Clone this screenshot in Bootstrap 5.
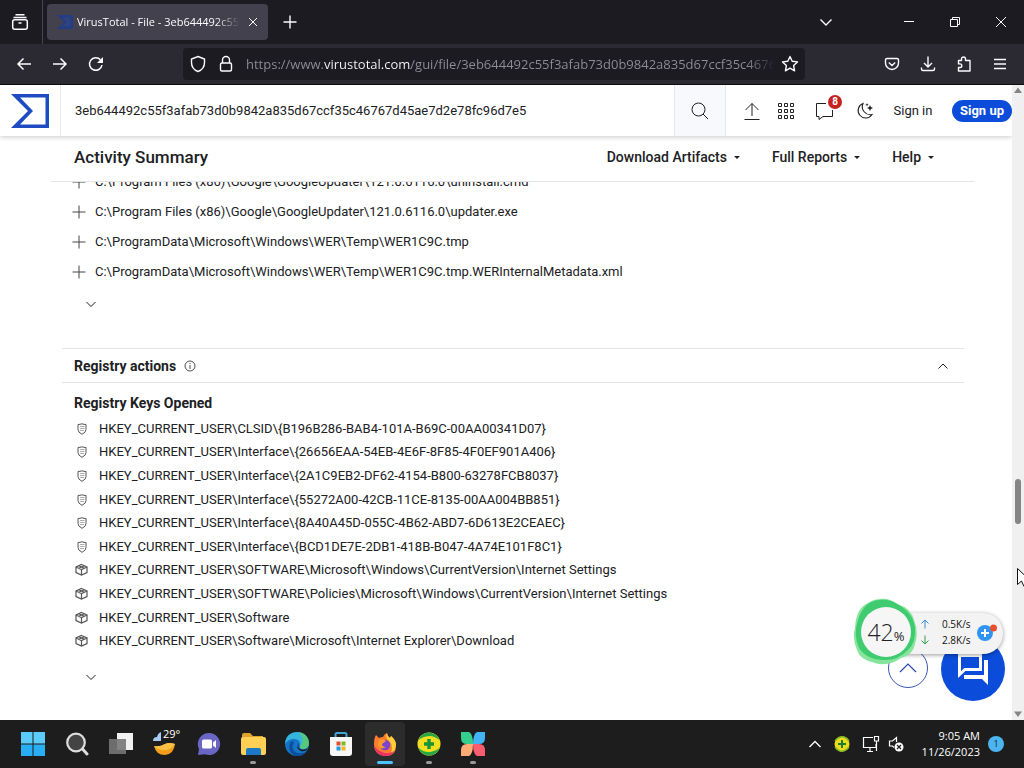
<!DOCTYPE html>
<html lang="en">
<head>
<meta charset="utf-8">
<meta name="viewport" content="width=device-width, initial-scale=1">
<title>VirusTotal - File</title>
<link href="https://cdn.jsdelivr.net/npm/bootstrap@5.3.0/dist/css/bootstrap.min.css" rel="stylesheet">
<style>
:root{--site:Roboto,"Liberation Sans",sans-serif;--ui:"Open Sans","Noto Sans",sans-serif}
body{font-family:var(--site);color:#202124;font-size:13px;line-height:20px;overflow:hidden;background:#fff}
svg{display:block;flex:none}
svg:not([stroke]){stroke:currentColor}
svg:not([fill]){fill:none}
button{border:0;background:none;color:inherit;padding:0}
a{color:inherit;text-decoration:none}
h1,h2,h3,ul{margin:0;padding:0}
.tabs-bar{height:44px;background:#1c1b22;color:#fbfbfe;font-family:var(--ui)}
.tab-view{width:43px;border-right:1px solid #47464e;padding-right:2px}
.tab-item{width:221px;height:36px;background:#42414d;border-radius:4px;margin-left:4px;padding:0 10px;font-size:11px}
.tab-title{-webkit-mask-image:linear-gradient(90deg,#000 85%,transparent);mask-image:linear-gradient(90deg,#000 85%,transparent);overflow:hidden;white-space:nowrap}
.sq{width:36px;height:36px;display:flex;align-items:center;justify-content:center;flex:none}
.win{width:46px}
.win-group{margin-left:42px}
.nav-bar{height:41px;background:#2b2a33;color:#fbfbfe;border-bottom:1px solid #0c0c0d;font-family:var(--ui);padding:0 6px}
.url-box{background:#1c1b22;height:32px;margin:0 69px;border-radius:4px;padding:0 6px 0 7px;min-width:0}
.url-box input{border:0;outline:0;padding:0;min-width:0;font-size:13px;color:#fbfbfe;background:linear-gradient(90deg,#8f8e98 77px,#fbfbfe 77px,#fbfbfe 165px,#8f8e98 165px,#8f8e98 500px,#1c1b22 530px);-webkit-background-clip:text;background-clip:text;-webkit-text-fill-color:transparent}
.view{min-height:0}
.site-head{height:51px;box-shadow:0 1px 5px rgba(0,0,0,.22);z-index:2;background:#fff}
.logo-cell{width:61px;border-right:1px solid #e8e8e8;padding-left:11px}
.site-head input{border:0;outline:0;padding:0 14px;min-width:0;color:#202124}
.find{width:52px;background:#f8f9fc;border:solid #e4e6ea;border-width:0 1px}
.head-tools{padding-left:9px}
.t34{width:34px}.t44{width:44px}.t36{width:36px}
.tip{left:21px;top:-7px;width:14px;height:14px;border-radius:7px;background:#c5221f;color:#fff;font-size:10px;line-height:14px;font-weight:700}
.sign-in{width:60px;text-align:center}
.sign-up{width:60px;height:22px;border-radius:11px;background:#0b4dda;color:#fff;font-weight:700;margin-left:9px}
.sum-bar{height:46px;margin:0 38px 0 51px;padding:0 40px 3px 23px;border-bottom:1px solid #e4e4e4}
.sum-bar h1{font-size:17px;line-height:24px;font-weight:500}
.sum-menu{gap:32px}
.sum-menu button{font-size:14px;font-weight:500;display:flex;align-items:center;gap:7px}
.caret{width:0;height:0;border:3px solid transparent;border-top-color:#202124;margin-top:4px}
.report{min-height:0;margin:0 48px 0 62px}
.files{margin-top:-15px;padding-left:10px}
.files li{height:30px;gap:9px}
.files svg{color:#444}
.more{margin-left:22px;height:14px;width:14px}
.more-files{margin-top:10px}
.acc{margin-top:37px;height:35px;border:solid #e4e4e4;border-width:1px 0;padding:0 14px 0 12px}
.acc h2,.keys-title{font-size:14px;line-height:20px;font-weight:700}
.keys-title{margin:10px 0 4px 12px}
.keys{height:236px;display:grid;grid-auto-rows:1fr;padding-left:13px}
.keys li{gap:10px}
.keys svg{color:#555}
.more-keys{margin-top:17px}
.scroll{width:12px;background:#f0f0f0}
.thumb{left:3px;top:62%;width:6px;height:45px;border-radius:3px;background:#858585}
.over{z-index:4}
.to-top{right:96px;bottom:32px;width:40px;height:40px;border:1px solid #3d55b0;border-radius:20px;background:#fff;color:#2c48ad}
.chat{right:19px;bottom:19px;width:64px;height:64px;border-radius:32px;background:#0b4dda;color:#fff}
.meter{right:21px;bottom:54px;height:68px;width:150px}
.pill{left:34px;right:0;top:15px;height:41px;border-radius:0 20px 20px 0;background:#f3f3f3;box-shadow:0 1px 4px rgba(0,0,0,.4);font:10px/16px var(--ui);color:#111;padding:0 0 3px 33px;gap:6px}
.speed{gap:12px;justify-content:space-between}
.dial{left:0;top:0;width:66px;height:68px}
.dial-text{left:5px;top:6px;width:56px;height:56px;font-family:var(--ui);font-weight:300;font-size:23px;line-height:56px;text-align:center;color:#222}
.dial-text small{font-size:13px;font-weight:400}
.pointer{right:-1px;top:483px}
.taskbar{height:48px;background:#1d1d1d;color:#fff;font-family:var(--ui);padding-left:11px}
.app{width:44px;height:44px;display:flex;align-items:center;justify-content:center;position:relative}
.app.on{background:#2c2c2c;border-radius:4px;width:40px;margin:0 2px}
.app.run::after{content:"";position:absolute;bottom:2px;width:6px;height:3px;border-radius:2px;background:#999}
.app.on::after{width:16px;background:#4cc2ff}
.deg{left:20px;top:4px;font-size:11px;line-height:16px}
.tray{gap:8px;padding-right:20px}
.clock{font-size:11px;line-height:16px;text-align:right;width:68px}
.note{width:16px;height:16px;border-radius:8px;background:#4cb5f0;color:#123;font-size:9px;line-height:16px;text-align:center}
</style>
</head>
<body class="vh-100 d-flex flex-column">
<svg class="d-none">
  <symbol id="plus" viewBox="0 0 14 14"><path d="M7 .5v13M.5 7h13"/></symbol>
  <symbol id="down" viewBox="0 0 14 14"><path d="M2.500 5l4.500 4.500L11.500 5"/></symbol>
  <symbol id="shield" viewBox="0 0 14 14"><path d="M3 2.500Q5 2.500 7 1.800 9 2.500 11 2.500V7.500Q11 10.500 7 12.300 3 10.500 3 7.500Z"/><path d="M5 4.500h4.500M5 6.500h4.500M5 8.500h4" stroke-width=".8" opacity=".6"/></symbol>
  <symbol id="cube" viewBox="0 0 14 14"><path d="M6.500 1.500 12 4v5.500L6.500 12 1 9.500V4ZM1 4l5.500 2.500L12 4M6.500 6.500V12M3.800 2.800 9.500 5.300M9.300 2.800 3.800 5.300" stroke-width="1.200"/></symbol>
</svg>

<header class="tabs-bar d-flex align-items-center flex-shrink-0">
  <button class="tab-view h-100 d-flex align-items-center justify-content-center flex-shrink-0" aria-label="View tabs"><svg width="18" height="18" viewBox="0 0 18 18" stroke-width="1.500"><path d="M4.500 1.800h9M2.500 4.500h13"/><rect x="1.700" y="6.800" width="14.600" height="9.400" rx="2"/><path d="M7.500 10h3"/></svg></button>
  <div class="tab-item d-flex align-items-center">
    <svg width="16" height="16" viewBox="0 0 16 16" stroke="none"><path fill="#233d84" d="M0 1h16v14H0l7-7z"/><path fill="#31437c" d="M5 3.500h8.500v9H5L9.500 8z"/></svg>
    <span class="tab-title flex-grow-1 ms-1">VirusTotal - File - 3eb644492c55f3</span>
    <button class="ms-2" aria-label="Close tab"><svg width="10" height="10" viewBox="0 0 10 10"><path d="M1 1l8 8M9 1L1 9"/></svg></button>
  </div>
  <button class="sq ms-1" aria-label="New tab"><svg width="14" height="14" stroke-width="1.400"><use href="#plus"/></svg></button>
  <button class="sq ms-auto" aria-label="List tabs"><svg width="14" height="14" viewBox="0 0 14 14" stroke-width="1.400"><path d="M1.500 4.500 7 10l5.500-5.500"/></svg></button>
  <div class="win-group d-flex">
    <button class="sq win" aria-label="Minimize"><svg width="10" height="10"><path d="M0 4.500h10"/></svg></button>
    <button class="sq win" aria-label="Restore"><svg width="10" height="10" viewBox="0 0 10 10"><path d="M.5 2.500h7v7h-7zM2.500 2V.5h7v7H8"/></svg></button>
    <button class="sq win" aria-label="Close"><svg width="10" height="10" viewBox="0 0 10 10"><path d="M0 0l10 10M10 0L0 10"/></svg></button>
  </div>
</header>

<nav class="nav-bar d-flex align-items-center flex-shrink-0" aria-label="Browser">
  <button class="sq" aria-label="Back"><svg width="16" height="16" viewBox="0 0 16 16" stroke-width="1.500"><path d="M15 8H2M7.500 2.500 2 8l5.500 5.500"/></svg></button>
  <button class="sq" aria-label="Forward"><svg width="16" height="16" viewBox="0 0 16 16" stroke-width="1.500"><path d="M1 8h13M8.500 2.500 14 8l-5.500 5.500"/></svg></button>
  <button class="sq" aria-label="Reload"><svg width="16" height="16" viewBox="0 0 16 16" stroke-width="1.500"><path d="M14 9A6.300 6.300 0 1 1 12.500 3.800"/><path fill="currentColor" stroke="none" d="M15 1v6H9z"/></svg></button>
  <div class="url-box d-flex align-items-center flex-grow-1">
    <svg width="16" height="18" viewBox="0 0 16 18" stroke-width="1.400"><path d="M8 1.500 14.500 4v3.500C14.500 12 12 15 8 16.500 4 15 1.500 12 1.500 7.500V4Z"/></svg>
    <svg class="ms-2 me-2 px-1 w-auto" width="16" height="18" viewBox="0 0 16 18" stroke-width="1.400"><rect x="2.500" y="8" width="11" height="8" rx="1.500"/><path d="M4.500 8V5a3.500 3.500 0 0 1 7 0v3"/></svg>
    <input class="flex-grow-1" aria-label="Address" value="https://www.virustotal.com/gui/file/3eb644492c55f3afab73d0b9842a835d67ccf35c46767d45ae7d2e78fc96d7e5">
    <button class="ms-2" aria-label="Bookmark"><svg width="18" height="18" viewBox="0 0 18 18" stroke-width="1.400" stroke-linejoin="round"><path d="M9 1.500l2.200 4.800 5.300.6-3.900 3.600 1 5.300L9 13.200l-4.600 2.600 1-5.300L1.500 6.900l5.300-.6z"/></svg></button>
  </div>
  <button class="sq" aria-label="Pocket"><svg width="16" height="16" viewBox="0 0 16 16" stroke-width="1.400"><path d="M3 2.500h10q1.500 0 1.500 1.500v3a6.500 6.500 0 0 1-13 0V4q0-1.500 1.500-1.500zM4.800 6.500 8 9.500l3.200-3"/></svg></button>
  <button class="sq" aria-label="Downloads"><svg width="16" height="16" viewBox="0 0 16 16" stroke-width="1.400"><path d="M8 .5V11M4 7l4 4 4-4M1.500 11.500V13q0 1.500 1.500 1.500h10q1.500 0 1.500-1.500v-1.500"/></svg></button>
  <button class="sq" aria-label="Extensions"><svg width="16" height="16" viewBox="0 0 16 16" stroke-width="1.400" stroke-linejoin="round"><path d="M5.500 4.500V3a2 2 0 0 1 4 0v1.500H14V15H2.500v-3.500H4a1.800 1.800 0 0 0 0-3.600H2.500V4.500z"/></svg></button>
  <button class="sq" aria-label="Menu"><svg width="14" height="14" viewBox="0 0 14 14" stroke-width="1.400"><path d="M1 2.500h12M1 7h12M1 11.500h12"/></svg></button>
</nav>

<div class="view flex-grow-1 d-flex position-relative">
  <main class="flex-grow-1 d-flex flex-column overflow-hidden">
    <div class="site-head d-flex align-items-stretch flex-shrink-0">
      <a class="logo-cell d-flex align-items-center flex-shrink-0" href="#" aria-label="VirusTotal"><svg width="38" height="34" viewBox="0 0 38 34"><path fill="#1c4bc2" stroke="none" fill-rule="evenodd" d="M0 0h38v34H0l17-17zM9 3.500 22 17 9 30.500h25.500v-27z"/></svg></a>
      <input class="flex-grow-1" aria-label="Search" value="3eb644492c55f3afab73d0b9842a835d67ccf35c46767d45ae7d2e78fc96d7e5">
      <button class="find d-flex align-items-center justify-content-center flex-shrink-0" aria-label="Search"><svg width="18" height="18" viewBox="0 0 18 18"><circle cx="7.500" cy="7.500" r="6.500"/><path d="M12 12l5 5"/></svg></button>
      <div class="head-tools d-flex align-items-center flex-shrink-0">
        <button class="sq t34" aria-label="Upload"><svg width="16" height="18" viewBox="0 0 16 18"><path d="M8 14V1.500M1.500 8 8 1.500 14.500 8M.5 17.500h15"/></svg></button>
        <button class="sq t34" aria-label="Apps"><svg width="18" height="18" viewBox="0 0 18 18"><path d="M1.500 1.500h3v3h-3zM7.500 1.500h3v3h-3zM13.500 1.500h3v3h-3zM1.500 7.500h3v3h-3zM7.500 7.500h3v3h-3zM13.500 7.500h3v3h-3zM1.500 13.500h3v3h-3zM7.500 13.500h3v3h-3zM13.500 13.500h3v3h-3z"/></svg></button>
        <button class="sq t44" aria-label="Comments"><span class="position-relative"><svg width="36" height="18" viewBox="0 0 36 18"><path d="M19 1.500H9.500v13H12v3l4-3h9.500V8"/></svg><span class="tip position-absolute">8</span></span></button>
        <button class="sq t36" aria-label="Dark mode"><svg width="18" height="18" viewBox="0 0 18 18" stroke-width="1.100"><path d="M7 1.500A7.500 7.500 0 1 0 16 12.500 8 8 0 0 1 7 1.500z"/><path fill="currentColor" stroke="none" d="M14 3l.9 2.100L17 6l-2.100.9L14 9l-.9-2.100L11 6l2.100-.9zM11 1l.5 1.200 1.200.5-1.200.5L11 4.400l-.5-1.200-1.200-.5 1.200-.5z"/></svg></button>
        <a class="sign-in" href="#">Sign in</a>
        <button class="sign-up">Sign up</button>
      </div>
    </div>
    <div class="sum-bar d-flex align-items-center justify-content-between flex-shrink-0">
      <h1>Activity Summary</h1>
      <div class="sum-menu d-flex">
        <button>Download Artifacts<span class="caret"></span></button>
        <button>Full Reports<span class="caret"></span></button>
        <button>Help<span class="caret"></span></button>
      </div>
    </div>
    <div class="flex-grow-1 overflow-hidden">
      <section class="report">
        <ul class="files list-unstyled">
          <li class="d-flex align-items-center"><svg width="14" height="14"><use href="#plus"/></svg>C:\Program Files (x86)\Google\GoogleUpdater\121.0.6116.0\uninstall.cmd</li>
          <li class="d-flex align-items-center"><svg width="14" height="14"><use href="#plus"/></svg>C:\Program Files (x86)\Google\GoogleUpdater\121.0.6116.0\updater.exe</li>
          <li class="d-flex align-items-center"><svg width="14" height="14"><use href="#plus"/></svg>C:\ProgramData\Microsoft\Windows\WER\Temp\WER1C9C.tmp</li>
          <li class="d-flex align-items-center"><svg width="14" height="14"><use href="#plus"/></svg>C:\ProgramData\Microsoft\Windows\WER\Temp\WER1C9C.tmp.WERInternalMetadata.xml</li>
        </ul>
        <button class="more more-files d-block" aria-label="Show more files"><svg width="14" height="14"><use href="#down"/></svg></button>
        <div class="acc d-flex align-items-center">
          <h2>Registry actions</h2>
          <svg class="ms-2" width="12" height="12" viewBox="0 0 12 12" stroke-width=".8"><circle cx="6" cy="6" r="5"/><path d="M6 5v4M6 3v1"/></svg>
          <button class="ms-auto" aria-label="Collapse"><svg width="14" height="14" viewBox="0 0 14 14"><path d="M2.500 9.500 7 5l4.500 4.500"/></svg></button>
        </div>
        <h3 class="keys-title">Registry Keys Opened</h3>
        <ul class="keys list-unstyled">
          <li class="d-flex align-items-center"><svg width="14" height="14"><use href="#shield"/></svg>HKEY_CURRENT_USER\CLSID\{B196B286-BAB4-101A-B69C-00AA00341D07}</li>
          <li class="d-flex align-items-center"><svg width="14" height="14"><use href="#shield"/></svg>HKEY_CURRENT_USER\Interface\{26656EAA-54EB-4E6F-8F85-4F0EF901A406}</li>
          <li class="d-flex align-items-center"><svg width="14" height="14"><use href="#shield"/></svg>HKEY_CURRENT_USER\Interface\{2A1C9EB2-DF62-4154-B800-63278FCB8037}</li>
          <li class="d-flex align-items-center"><svg width="14" height="14"><use href="#shield"/></svg>HKEY_CURRENT_USER\Interface\{55272A00-42CB-11CE-8135-00AA004BB851}</li>
          <li class="d-flex align-items-center"><svg width="14" height="14"><use href="#shield"/></svg>HKEY_CURRENT_USER\Interface\{8A40A45D-055C-4B62-ABD7-6D613E2CEAEC}</li>
          <li class="d-flex align-items-center"><svg width="14" height="14"><use href="#shield"/></svg>HKEY_CURRENT_USER\Interface\{BCD1DE7E-2DB1-418B-B047-4A74E101F8C1}</li>
          <li class="d-flex align-items-center"><svg width="14" height="14"><use href="#cube"/></svg>HKEY_CURRENT_USER\SOFTWARE\Microsoft\Windows\CurrentVersion\Internet Settings</li>
          <li class="d-flex align-items-center"><svg width="14" height="14"><use href="#cube"/></svg>HKEY_CURRENT_USER\SOFTWARE\Policies\Microsoft\Windows\CurrentVersion\Internet Settings</li>
          <li class="d-flex align-items-center"><svg width="14" height="14"><use href="#cube"/></svg>HKEY_CURRENT_USER\Software</li>
          <li class="d-flex align-items-center"><svg width="14" height="14"><use href="#cube"/></svg>HKEY_CURRENT_USER\Software\Microsoft\Internet Explorer\Download</li>
        </ul>
        <button class="more more-keys d-block" aria-label="Show more keys"><svg width="14" height="14"><use href="#down"/></svg></button>
      </section>
    </div>
  </main>
  <div class="scroll position-relative flex-shrink-0 d-flex flex-column justify-content-between">
    <svg width="12" height="12" viewBox="0 0 12 12"><path fill="#858585" stroke="none" d="M6 2.500 10 8H2z"/></svg>
    <div class="thumb position-absolute"></div>
    <svg width="12" height="12" viewBox="0 0 12 12"><path fill="#858585" stroke="none" d="M6 9 10 3.500H2z"/></svg>
  </div>
  <button class="to-top over position-absolute d-flex align-items-center justify-content-center" aria-label="Back to top"><svg width="18" height="18" viewBox="0 0 18 18" stroke-width="1.200"><path d="M1 13l8-8 8 8"/></svg></button>
  <button class="chat over position-absolute d-flex align-items-center justify-content-center" aria-label="Chat"><svg width="32" height="32" viewBox="0 0 32 32" stroke-width="3"><path d="M2.500 2.500h21v14H8l-5.500 5z"/><path fill="currentColor" stroke="none" d="M27 7h4v25l-6-6H7v-4h20z"/></svg></button>
  <aside class="meter over position-absolute" aria-label="Network speed">
    <div class="pill position-absolute d-flex align-items-center">
      <div>
        <div class="speed d-flex align-items-center"><svg width="10" height="10" viewBox="0 0 10 10" stroke="#2f8fdc"><path d="M5 9.500V1M1.500 4.500 5 1l3.500 3.500"/></svg>0.5K/s</div>
        <div class="speed d-flex align-items-center"><svg width="10" height="10" viewBox="0 0 10 10" stroke="#2ca04b"><path d="M5 .5V9M1.500 5.500 5 9l3.500-3.500"/></svg>2.8K/s</div>
      </div>
      <svg width="20" height="20" viewBox="0 0 20 20" stroke="none"><circle cx="8" cy="11" r="8" fill="#3094f2"/><path d="M8 7v8M4 11h8" stroke="#fff" stroke-width="2"/><circle cx="16.500" cy="6" r="3.500" fill="#e8502f"/></svg>
    </div>
    <svg class="dial position-absolute" viewBox="0 0 66 68" stroke="none"><path fill="#86e59b" d="M28 1Q36 0 44 6 58 10 61 22 66 34 62 46 60 57 48 60 35 69 22 65 7 62 4 52-1 40 2 30 3 10 15 5q6-4 13-4z"/><path fill="#3fcb6f" d="M26 2Q38 1 46 7 61 16 62 30q1 15-7 22-11 11-24 10Q14 62 6 50 0 36 5 22 11 3 26 2z"/><circle cx="33" cy="34" r="25" fill="#f6f6f6"/></svg>
    <div class="dial-text position-absolute">42<small>%</small></div>
  </aside>
  <svg class="pointer over position-absolute" width="8" height="20" viewBox="0 0 8 20"><path fill="#fff" stroke="#111" d="M.5.500v16l4-3.500 2.500 5.500 3-1.500-2.500-5h5z"/></svg>
</div>

<footer class="taskbar d-flex align-items-center justify-content-between flex-shrink-0">
  <div class="d-flex align-items-center">
    <button class="app" aria-label="Start"><svg width="24" height="24" viewBox="0 0 24 24" stroke="none"><path fill="#5bcbfa" d="M0 0h11.500v11.500H0zM12.500 0H24v11.500H12.500z"/><path fill="#28aef2" d="M0 12.500h11.500V24H0zM12.500 12.500H24V24H12.500z"/></svg></button>
    <button class="app" aria-label="Search"><svg width="24" height="24" viewBox="0 0 24 24"><circle cx="11" cy="10.500" r="8.800" stroke="#ddd" stroke-width="2.200" fill="#444"/><path d="M17.500 17l4.500 5" stroke="#ddd" stroke-width="3" stroke-linecap="round"/></svg></button>
    <button class="app" aria-label="Task view"><svg width="24" height="24" viewBox="0 0 24 24" stroke="none"><path fill="#f1f1f1" d="M8 1h16v17H8z"/><path fill="#777" opacity=".9" d="M0 7h17v15H0z"/></svg></button>
    <button class="app" aria-label="Weather"><svg width="24" height="24" viewBox="0 0 24 24" stroke="none"><path fill="#f59c1a" d="M1 14q6 1 11-2 4-2 10 0-1 10-10 11Q3 23 1 14z"/><path fill="#fbc145" d="M1 14q6 1 11-2 4-2 10 0-4 6-11 6-7 0-10-4z"/><path fill="#a8cbf4" d="M0 9q0-4 4-4 1-4 4-5v9z"/></svg><span class="deg position-absolute">29°</span></button>
    <button class="app" aria-label="Chat"><svg width="24" height="24" viewBox="0 0 24 24" stroke="none"><path fill="#6a66c4" d="M12 1a11 11 0 1 1-4 21.200L1 23l1-6A11 11 0 0 1 12 1z"/><rect x="5" y="7.500" width="10" height="9" rx="1.500" fill="#fff"/><path fill="#fff" d="M16 10.500 19 8v8l-3-2.500z"/></svg></button>
    <button class="app run" aria-label="File Explorer"><svg width="25" height="24" viewBox="0 0 25 24" stroke="none"><path fill="#e0a22a" d="M1 3q0-2 2-2h6l3 3h10v6H1z"/><rect x="0" y="5" width="25" height="18" rx="2" fill="#ffd053"/><path fill="#1c79c5" d="M5 23v-5q0-2 2-2h11q2 0 2 2v5z"/></svg></button>
    <button class="app" aria-label="Edge"><svg width="24" height="24" viewBox="0 0 24 24" stroke="none"><circle cx="12" cy="12" r="12" fill="#1573c8"/><path fill="#35b5dc" d="M0 12Q1 0 13 0q10 1 11 11 0 5-5 6-5 0-4-3 1-7-6-7-6 0-9 5z"/><path fill="#57c878" d="M14 0q9 2 10 11 0 5-5 6-4 0-4-2 6-8-1-15z"/><path fill="#0d4f9c" d="M9 10q-3 5 0 9 4 4 12 1-4 5-11 4Q2 19 5 11q2-3 4-1z"/><path fill="#1d1d1d" d="M14 11q-2 4 1 6 4 2 8-1-2 4-7 3-6-3-2-8z"/></svg></button>
    <button class="app" aria-label="Microsoft Store"><svg width="24" height="24" viewBox="0 0 24 24" stroke="none"><path fill="none" d="M6.500 6V2.500q0-1.500 1.500-1.500h8q1.500 0 1.500 1.500V6" stroke="#3fa7d6" stroke-width="2"/><path fill="#f7f7f7" d="M1 5h22v16q0 3-3 3H4q-3 0-3-3z"/><path fill="#e3502d" d="M7.500 9.500h4v4h-4z"/><path fill="#7fb928" d="M12.500 9.500h4v4h-4z"/><path fill="#1f9de0" d="M7.500 14.500h4v4h-4z"/><path fill="#f7b520" d="M12.500 14.500h4v4h-4z"/></svg></button>
    <button class="app on run" aria-label="Firefox"><svg width="24" height="24" viewBox="0 0 24 24" stroke="none"><path fill="#ff7b2e" d="M3 3l3 3q2-1 4-1 1-3 4-4 0 3 3 5l1-2q5 4 5 10 0 10-11 10Q1 23 1 12q0-6 2-9z"/><path fill="#ffcf3b" d="M14 1q0 3 3 5l1-2q5 4 5 9-1 7-5 8 3-9-3-13-3-3-1-7z"/><path fill="#f0306a" d="M1 13q1 10 11 11 7 0 9-5-6 4-12 1Q3 18 1 13z"/><circle cx="12" cy="13" r="5.200" fill="#7a45d0"/><path fill="#ff9a2b" d="M6 8q4-2 7 1l-4 3q0 3 4 3-5 3-8-1-1-3 1-6z"/></svg></button>
    <button class="app run" aria-label="Security"><svg width="24" height="24" viewBox="0 0 24 24" stroke="none"><circle cx="12" cy="12" r="11.500" fill="#f3df20"/><path fill="#2aa745" d="M1 9Q4 0 13 .5q7 1 10 8-7-6-14-4Q3 6 1 9zM23 15q-3 9-12 8.500-7-1-10-8 7 6 14 4 6-1.500 8-4.500z"/><path d="M12 7v10M7 12h10" stroke="#189336" stroke-width="3.400"/></svg></button>
    <button class="app run" aria-label="Clover"><svg width="24" height="24" viewBox="0 0 24 24" stroke="none"><path fill="#34cf8d" d="M0 0h8q4 2 4 12H6Q0 12 0 6z"/><path fill="#42b3f5" d="M24 0h-8q-4 2-4 12h6q6 0 6-6z"/><path fill="#ffab76" d="M0 24h8q4-2 4-12H6q-6 0-6 6z"/><path fill="#fa5c70" d="M24 24h-8q-4-2-4-12h6q6 0 6 6z"/></svg></button>
  </div>
  <div class="tray d-flex align-items-center">
    <button aria-label="Hidden icons"><svg width="14" height="14" viewBox="0 0 14 14" stroke-width="1.300"><path d="M1.500 10 7 4.500l5.500 5.500"/></svg></button>
    <svg class="ms-1" width="16" height="16" viewBox="0 0 16 16"><circle cx="8" cy="8" r="7.500" fill="#eedb19" stroke="none"/><path d="M1 5q4-5 9-4 3 1 5 4M15 11q-4 5-9 4-3-1-5-4" stroke="#80b828" stroke-width="1.500"/><path d="M8 4v8M4 8h8" stroke="#16802f" stroke-width="2"/></svg>
    <svg class="ms-1" width="18" height="18" viewBox="0 0 18 18" stroke-width="1.200"><path d="M11 2.500H1.500v10H14V9M5 16.500h6M8 12.500v4M12.500 1.500h4V6h-4zM14.500 6v10"/></svg>
    <svg width="16" height="16" viewBox="0 0 16 16" stroke-width="1.200"><path d="M8.500 6V1.500L4.500 5H1.500v5h3l1.500 1.500"/><circle cx="11" cy="11" r="4.500" fill="#fff" stroke="none"/><path d="M9 9l4 4M13 9l-4 4" stroke="#1d1d1d"/></svg>
    <div class="clock">9:05 AM<br>11/26/2023</div>
    <div class="note">1</div>
  </div>
</footer>
<script src="https://cdn.jsdelivr.net/npm/bootstrap@5.3.0/dist/js/bootstrap.bundle.min.js"></script>
</body>
</html>
